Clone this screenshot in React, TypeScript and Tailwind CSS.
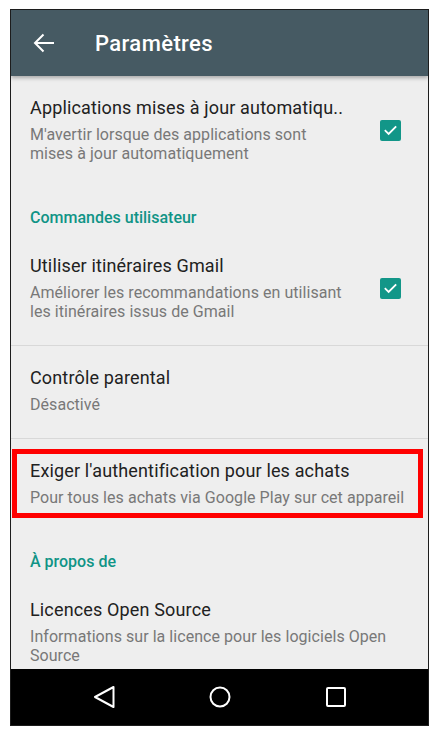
import React from 'react';

type Row = {
  title: string;
  lines: string[];
  checked?: boolean;
  divider?: boolean;
  highlight?: boolean;
};

const Checkbox: React.FC = () => (
  <div className="w-[21px] h-[21px] rounded-[2px] bg-[#129688] flex items-center justify-center shrink-0">
    <svg width="15" height="15" viewBox="0 0 24 24" fill="none">
      <path d="M4 12.5l5 5L20 6.5" stroke="white" strokeWidth="3" strokeLinecap="square" />
    </svg>
  </div>
);

const SettingRow: React.FC<{ row: Row }> = ({ row }) => (
  <div className="relative">
    <div className="flex items-center pl-[19px] pr-[27px] pt-[21px] pb-[24px]">
      <div className="flex-1 min-w-0">
        <div className="text-[18px] leading-[22px] tracking-[0.15px] text-[#212121] whitespace-nowrap">{row.title}</div>
        <div className="mt-[6px] text-[16px] leading-[19px] tracking-[0.05px] text-[#787878]">
          {row.lines.map((l, i) => (
            <div key={i} className="whitespace-nowrap">{l}</div>
          ))}
        </div>
      </div>
      {row.checked && <Checkbox />}
    </div>
    {row.highlight && (
      <div className="absolute left-px top-[10px] w-[411px] h-[69px] border-[5px] border-[#ff0000]" />
    )}
    {row.divider && <div className="h-px bg-[#d8d8d8]" />}
  </div>
);

const SectionHeader: React.FC<{ label: string }> = ({ label }) => (
  <div className="pl-[19px] pt-[21px] pb-[6px] text-[16px] leading-[20px] font-medium text-[#109486]">
    {label}
  </div>
);

export default function App() {
  return (
    <div className="w-[438px] h-[730px] bg-white font-['Roboto',sans-serif] overflow-hidden">
      <div className="ml-[10px] mt-[9px] w-[419px] h-[717px] border border-[#1c1c1c] flex flex-col overflow-hidden">
        {/* Toolbar */}
        <div className="relative z-10 h-[66px] bg-[#465a63] flex items-center shadow-[0_2px_4px_rgba(0,0,0,0.3)] shrink-0">
          <svg className="ml-[21px]" width="24" height="24" viewBox="0 0 24 24" fill="none">
            <path d="M22 12H3M11.5 3.5L3 12l8.5 8.5" stroke="white" strokeWidth="2" />
          </svg>
          <span className="ml-[39px] text-[22px] tracking-[0.4px] font-medium text-white">Paramètres</span>
        </div>

        {/* Settings list */}
        <div className="flex-1 bg-[#eeeeee] overflow-hidden">
          <SettingRow
            row={{
              title: 'Applications mises à jour automatiqu..',
              lines: ["M'avertir lorsque des applications sont", 'mises à jour automatiquement'],
              checked: true,
            }}
          />
          <SectionHeader label="Commandes utilisateur" />
          <SettingRow
            row={{
              title: 'Utiliser itinéraires Gmail',
              lines: ['Améliorer les recommandations en utilisant', 'les itinéraires issus de Gmail'],
              checked: true,
              divider: true,
            }}
          />
          <SettingRow row={{ title: 'Contrôle parental', lines: ['Désactivé'], divider: true }} />
          <SettingRow
            row={{
              title: "Exiger l'authentification pour les achats",
              lines: ['Pour tous les achats via Google Play sur cet appareil'],
              highlight: true,
            }}
          />
          <SectionHeader label="À propos de" />
          <SettingRow
            row={{
              title: 'Licences Open Source',
              lines: ['Informations sur la licence pour les logiciels Open', 'Source'],
            }}
          />
        </div>

        {/* Navigation bar */}
        <div className="h-[56px] bg-black flex items-center justify-center gap-[92px] shrink-0">
          <svg width="24" height="24" viewBox="0 0 24 24" fill="none">
            <path d="M21.5 2L3 12l18.5 10z" stroke="white" strokeWidth="2" strokeLinejoin="round" />
          </svg>
          <svg width="24" height="24" viewBox="0 0 24 24" fill="none">
            <circle cx="12" cy="12" r="9.5" stroke="white" strokeWidth="2" />
          </svg>
          <svg width="24" height="24" viewBox="0 0 24 24" fill="none">
            <rect x="3" y="3" width="18" height="18" rx="1" stroke="white" strokeWidth="2" />
          </svg>
        </div>
      </div>
    </div>
  );
}
